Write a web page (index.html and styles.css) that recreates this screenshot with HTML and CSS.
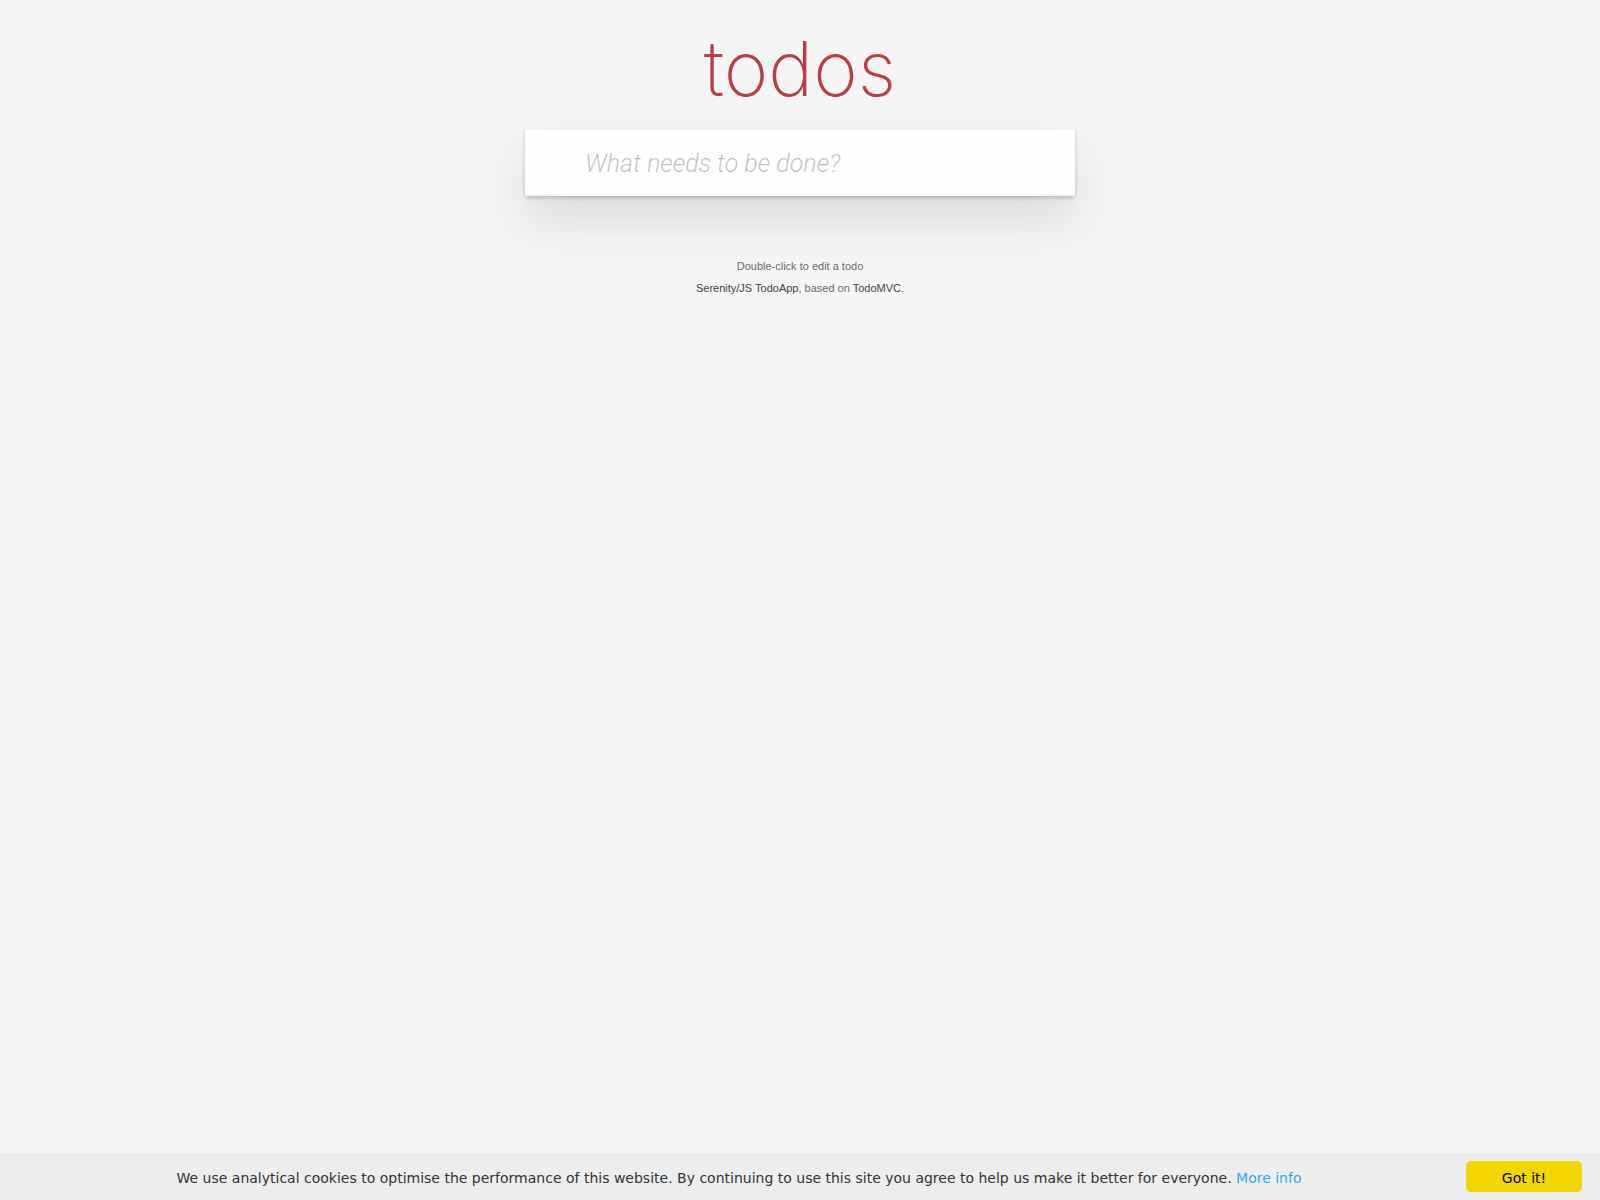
FILE: index.html
```
<!DOCTYPE html>
<html lang="en">
<head>
<meta charset="utf-8">
<title>Serenity/JS TodoApp</title>
<link rel="stylesheet" href="styles.css">
</head>
<body>
<main class="app">
  <h1 class="title">todos</h1>
  <form class="entry">
    <input class="new-todo" type="text" placeholder="What needs to be done?" aria-label="New todo">
  </form>
</main>
<footer class="info">
  <p>Double-click to edit a todo</p>
  <p><a href="#">Serenity/JS TodoApp</a>, based on <a href="#">TodoMVC</a>.</p>
</footer>
<section class="cookies" aria-label="Cookie consent">
  <p class="message">We use analytical cookies to optimise the performance of this website. By continuing to use this site you agree to help us make it better for everyone. <a href="#">More info</a></p>
  <button class="accept" type="button">Got it!</button>
</section>
</body>
</html>
```
FILE: styles.css
```
* {
  box-sizing: border-box;
}

body {
  display: flex;
  flex-direction: column;
  min-height: 100vh;
  margin: 0;
  background: #f5f5f5;
  color: #4d4d4d;
  font-family: "Helvetica Neue", "Liberation Sans", sans-serif;
  font-weight: 300;
}

.app {
  width: 100%;
  max-width: 550px;
  margin: 0 auto;
}

.title {
  margin: 0;
  padding: 14px 0 8px;
  color: #b83f45;
  font-family: "Helvetica Neue", Inter, "Liberation Sans", sans-serif;
  font-size: 76px;
  font-weight: 200;
  line-height: 108px;
  text-align: center;
}

.entry {
  margin: 0;
  background: #fff;
  box-shadow: 0 2px 4px rgba(0, 0, 0, 0.2), 0 25px 50px rgba(0, 0, 0, 0.1);
}

.new-todo {
  display: block;
  width: 100%;
  height: 66px;
  padding: 16px 16px 16px 60px;
  border: 0;
  outline: 0;
  background: rgba(0, 0, 0, 0.003);
  box-shadow: inset 0 -2px 1px rgba(0, 0, 0, 0.03);
  color: #111;
  font-family: "Helvetica Neue", Roboto, "Liberation Sans", sans-serif;
  font-size: 25px;
  font-weight: 300;
  line-height: 34px;
}

.new-todo::placeholder {
  color: rgba(0, 0, 0, 0.25);
  font-style: italic;
}

.info {
  margin-top: 65px;
  color: #6b6b6b;
  font-size: 11px;
  text-align: center;
}

.info p {
  margin: 0 0 11px;
  line-height: 11px;
}

.info a {
  color: #444;
  text-decoration: none;
}

.cookies {
  display: flex;
  align-items: center;
  gap: 16px;
  min-height: 47px;
  margin-top: auto;
  padding: 8px 18px 8px 28px;
  background: #ededed;
  color: #333;
  font-family: Verdana, "DejaVu Sans", sans-serif;
  font-size: 14px;
  font-weight: 400;
  line-height: 21px;
}

.message {
  flex: 1;
  margin: 0;
  padding-top: 4px;
  text-align: center;
}

.message a {
  color: #31a8f0;
  text-decoration: none;
}

.accept {
  width: 116px;
  height: 31px;
  padding: 4px 0 0;
  border: 0;
  border-radius: 5px;
  background: #f1d600;
  color: #000;
  font: inherit;
}
```
